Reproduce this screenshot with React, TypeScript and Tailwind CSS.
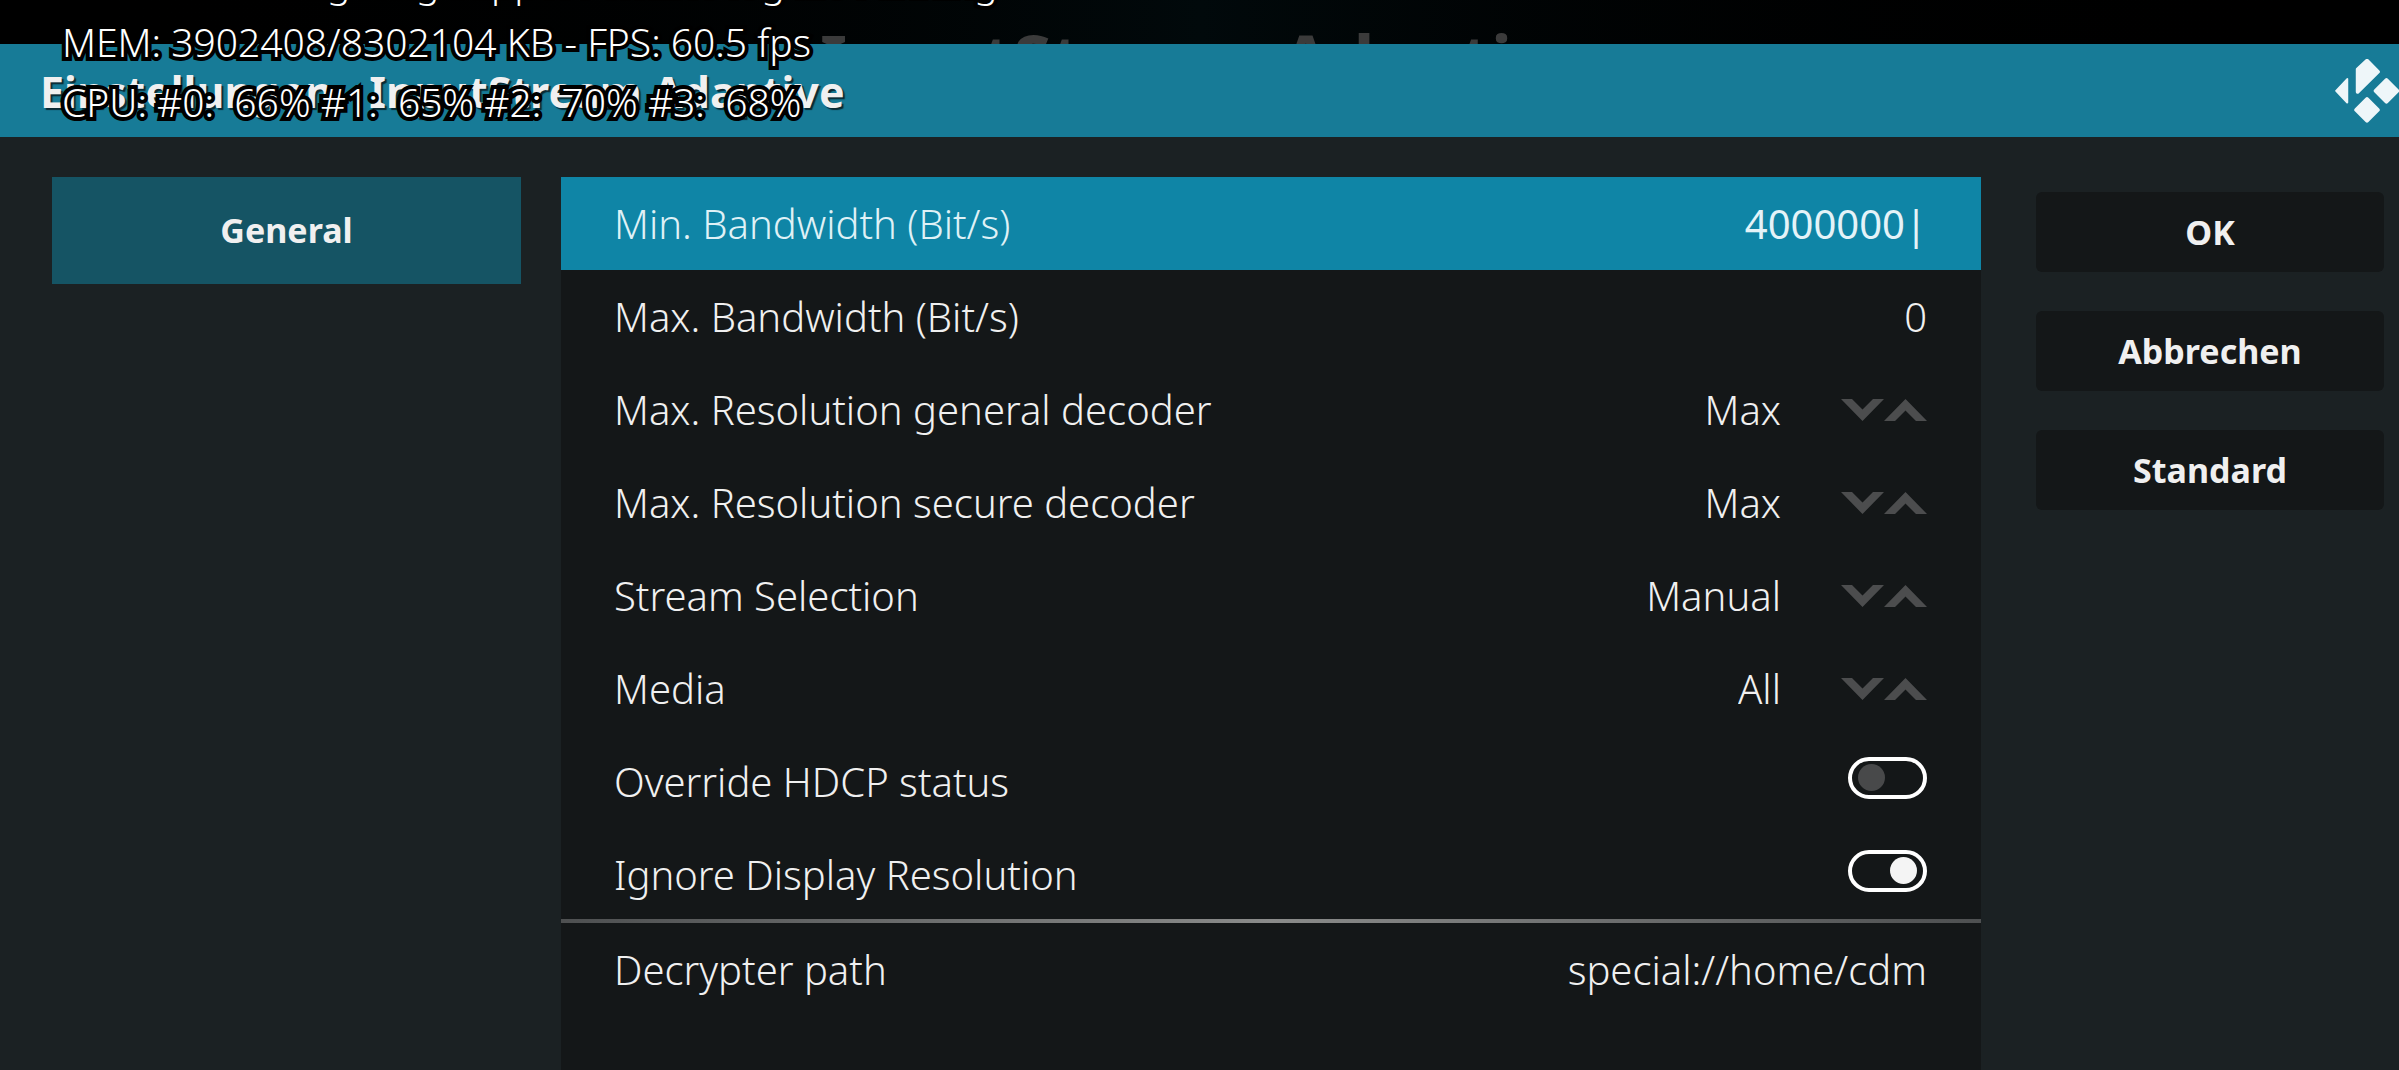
import React, { useState } from 'react';

type Setting = {
  id: string;
  label: string;
  kind: 'text' | 'select' | 'toggle';
  value?: string;
  checked?: boolean;
  focused?: boolean;
};

const settings: Setting[] = [
  { id: 'min-bandwidth', label: 'Min. Bandwidth (Bit/s)', kind: 'text', value: '4000000|', focused: true },
  { id: 'max-bandwidth', label: 'Max. Bandwidth (Bit/s)', kind: 'text', value: '0' },
  { id: 'max-resolution', label: 'Max. Resolution general decoder', kind: 'select', value: 'Max' },
  { id: 'max-resolution-secure', label: 'Max. Resolution secure decoder', kind: 'select', value: 'Max' },
  { id: 'stream-selection', label: 'Stream Selection', kind: 'select', value: 'Manual' },
  { id: 'media', label: 'Media', kind: 'select', value: 'All' },
  { id: 'override-hdcp', label: 'Override HDCP status', kind: 'toggle', checked: false },
  { id: 'ignore-display', label: 'Ignore Display Resolution', kind: 'toggle', checked: true },
];

const KodiLogo = () => (
  <svg viewBox="258 86 190 191" className="h-16 w-16" fill="#eef6f9" stroke="#eef6f9" strokeLinejoin="round" aria-label="Kodi">
    <path d="M261 181 294 146V216Z" strokeWidth="6" />
    <path d="M325 117 353 91 386 124 325 184Z" strokeWidth="11" />
    <path d="M353 206 385 238 353 270 321 238Z" strokeWidth="12" />
    <path d="M411 149 443 181 411 213 379 181Z" strokeWidth="12" />
  </svg>
);

const Spinner = () => (
  <div className="flex">
    <button aria-label="Previous">
      <svg viewBox="0 0 43 22" className="h-[22px] w-[43px]" fill="#4c4d4e">
        <path d="M0 0H11L21.5 10.5 32 0H43L21.5 22Z" />
      </svg>
    </button>
    <button aria-label="Next">
      <svg viewBox="0 0 43 22" className="h-[22px] w-[43px]" fill="#4c4d4e">
        <path d="M0 22H11L21.5 11.5 32 22H43L21.5 0Z" />
      </svg>
    </button>
  </div>
);

const Toggle = ({ id, initial }: { id: string; initial: boolean }) => {
  const [on, setOn] = useState(initial);

  return (
    <input
      id={id}
      type="checkbox"
      role="switch"
      checked={on}
      onChange={() => setOn(!on)}
      className="mb-2 flex h-[42px] w-[79px] appearance-none items-center rounded-full border-4 border-white px-[6px] before:h-[27px] before:w-[27px] before:rounded-full before:bg-[#48494a] checked:justify-end checked:before:bg-[#f4f4f4]"
    />
  );
};

const TextValue = ({ id, value, focused }: { id: string; value?: string; focused?: boolean }) => (
  <input
    id={id}
    type="text"
    defaultValue={value}
    className={
      focused
        ? 'w-1/2 bg-transparent text-right font-normal text-[#e4f3f8] outline-none'
        : 'w-1/2 bg-transparent text-right outline-none'
    }
  />
);

const SettingRow = ({ setting }: { setting: Setting }) => (
  <div
    className={
      setting.focused
        ? 'flex h-[93px] items-center justify-between bg-[#0f85a6] pr-[54px] pl-[53px] text-[#dff1f6]'
        : 'flex h-[93px] items-center justify-between pr-[54px] pl-[53px]'
    }
  >
    <label htmlFor={setting.id}>{setting.label}</label>
    {setting.kind === 'text' && <TextValue id={setting.id} value={setting.value} focused={setting.focused} />}
    {setting.kind === 'select' && (
      <div className="flex items-center gap-[60px]">
        <select id={setting.id} className="appearance-none bg-transparent text-right outline-none">
          <option>{setting.value}</option>
        </select>
        <Spinner />
      </div>
    )}
    {setting.kind === 'toggle' && <Toggle id={setting.id} initial={!!setting.checked} />}
  </div>
);

const DebugOverlay = () => (
  <div className="pointer-events-none absolute -top-12 left-[62px] text-[39px] leading-[60px] font-light whitespace-pre text-white [paint-order:stroke_fill] [-webkit-text-stroke:8px_black]">
    <p>LOG: test debug long support enable log file running</p>
    <p>MEM: 3902408/8302104 KB - FPS: 60.5 fps</p>
    <p>{'CPU: #0:  66% #1:  65% #2:  70% #3:  68%'}</p>
  </div>
);

const App = () => {
  return (
    <div className="relative flex min-h-screen flex-col overflow-hidden bg-[#1b2123] font-['Noto_Sans',sans-serif] text-[#f0f0f0]">
      <div className="relative h-11 overflow-hidden bg-linear-to-r from-black via-[#01090b] to-black">
        <span className="absolute top-6 left-[820px] text-[70px] leading-none font-bold whitespace-nowrap text-[#3b3b3b]">
          InputStream Adaptive
        </span>
      </div>

      <header className="flex h-[93px] items-center justify-between bg-[#177b97] pl-10">
        <h1 className="pt-1 text-[43px] font-bold [text-shadow:2px_2px_1px_#0a2a33]">
          Einstellungen - InputStream Adaptive
        </h1>
        <KodiLogo />
      </header>

      <div className="grid flex-1 grid-cols-[561fr_1420fr_418fr] pt-10">
        <nav className="pr-10 pl-[52px]">
          <button className="h-[107px] w-full bg-[#155464] text-[34px] font-bold">General</button>
        </nav>

        <main className="bg-[#141718] text-[40px] leading-[56px] font-light">
          {settings.map((setting) => (
            <SettingRow key={setting.id} setting={setting} />
          ))}
          <hr className="-mt-[2px] h-1 border-0 bg-linear-to-r from-[#4e5051] via-[#8a8b8a] to-[#4e5051]" />
          <SettingRow
            setting={{ id: 'decrypter-path', label: 'Decrypter path', kind: 'text', value: 'special://home/cdm' }}
          />
        </main>

        <aside className="flex flex-col gap-[39px] pt-[15px] pr-[15px] pl-[55px] text-[34px] font-bold">
          <button className="h-20 rounded-md bg-[#141718]">OK</button>
          <button className="h-20 rounded-md bg-[#141718]">Abbrechen</button>
          <button className="h-20 rounded-md bg-[#141718]">Standard</button>
        </aside>
      </div>

      <DebugOverlay />
    </div>
  );
};

export default App;
